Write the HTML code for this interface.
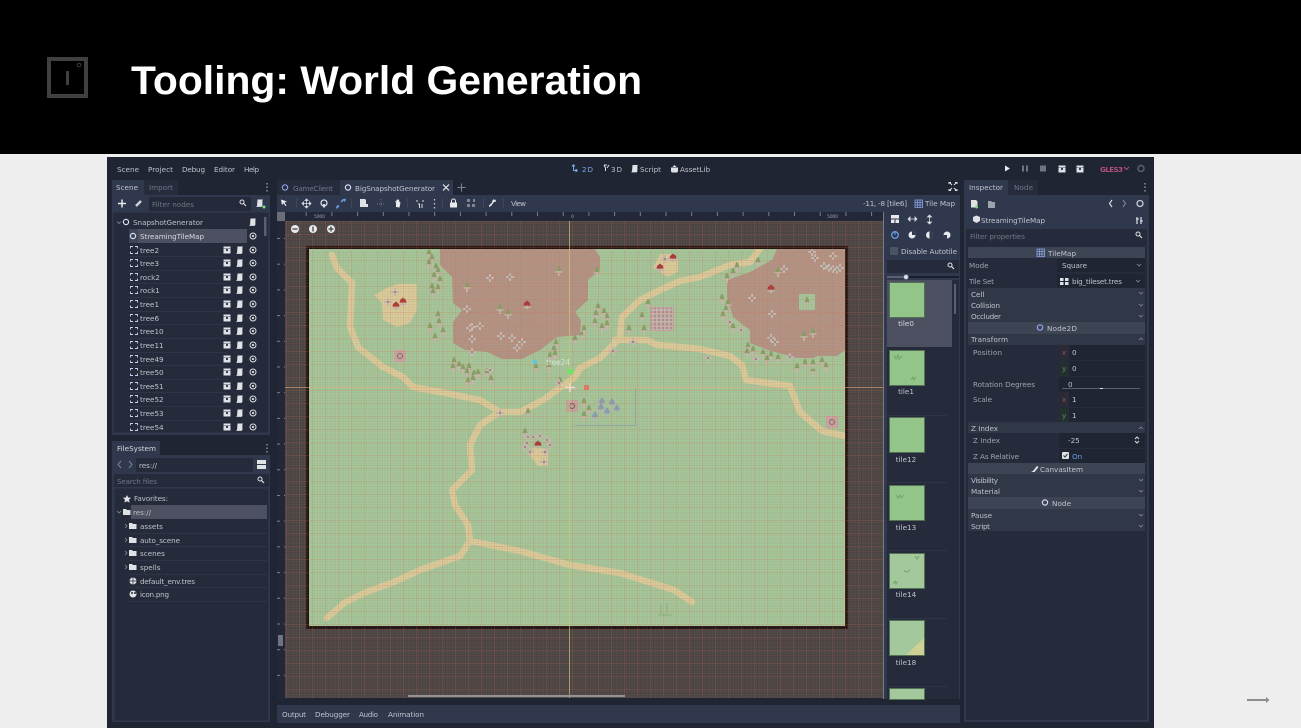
<!DOCTYPE html>
<html><head><meta charset="utf-8"><title>Tooling: World Generation</title>
<style>
html,body{margin:0;padding:0;background:#eee;width:1301px;height:728px;overflow:hidden}
svg{display:block}
text{font-family:"DejaVu Sans","Liberation Sans",sans-serif;font-size:7.2px;fill:#bfc3cc}
.d{fill:#6f7685}
.b{fill:#d5d8de}
#ui{filter:blur(.35px)}
</style></head><body>
<svg width="1301" height="728" viewBox="0 0 1301 728" xmlns="http://www.w3.org/2000/svg">
<defs>
<pattern id="fine" width="2.6" height="2.6" patternUnits="userSpaceOnUse"><path d="M0 0H2.6M0 0V2.6" stroke="#c8644a" stroke-opacity=".22" stroke-width=".8" fill="none"/></pattern>
<pattern id="major" width="13" height="13" patternUnits="userSpaceOnUse"><path d="M0 0H13M0 0V13" stroke="#d8664a" stroke-opacity=".3" stroke-width="1" fill="none"/></pattern>
<pattern id="tx" width="25.7" height="8" patternUnits="userSpaceOnUse" x="280"><path d="M.5 4V8" stroke="#7a8090" fill="none"/></pattern>
<pattern id="ty" width="8" height="25.7" patternUnits="userSpaceOnUse" y="238"><path d="M4 .5H8" stroke="#7a8090" fill="none"/></pattern>
<pattern id="dots" width="4" height="4" patternUnits="userSpaceOnUse" x="651" y="308"><rect width="4" height="4" fill="#a88e8e"/><circle cx="2" cy="2" r="1.600" fill="#d2c9c5"/><circle cx="2" cy="2" r=".5" fill="#85797a"/></pattern>
<clipPath id="mp"><rect x="309" y="249" width="536" height="377"/></clipPath>
<clipPath id="cv"><rect x="285" y="221" width="598" height="477"/></clipPath>
<g id="tr"><path d="M-.9-1.500h1.800v6.500h-1.800zM-3.500-.2h7v1.800h-7z" fill="#c4baae"/><path d="M0-5.500L2-2.500 1.400-2.500 2.800 .5 0 0-2.800 .5-1.400-2.500-2-2.500Z" fill="#84a268"/></g>
<g id="tb"><path d="M-.9-1.500h1.800v6.500h-1.800zM-3.500-.2h7v1.800h-7z" fill="#b4b8ba"/><path d="M0-5L2.600-1 2.800 1 0 1.500-2.800 1-2.600-1Z" fill="#84a0b4"/></g>
<g id="rk"><path d="M-1-4h2v3h3v2h-3v3h-2v-3h-3v-2h3z" fill="#c6bab2"/><rect x="-1" y="-1" width="2" height="2" fill="#948d8a"/></g>
<g id="ms"><path d="M-1-1h2v5h-2zM-3.500 1.500h7v1.400h-7z" fill="#c4b8ae"/><path d="M0-4.500L3-2 3.500 .6h-7L-3-2Z" fill="#a83a3a"/></g>
<g id="ti"><path d="M-3.500-1.500v-2h2.500M1-3.500h2.500v2M3.500 1.500v2h-2.500M-1 3.500h-2.500v-2" fill="none" stroke="#c6d2f2" stroke-width=".9"/></g>
<g id="nd"><circle r="2.600" fill="none" stroke="#d8dcf2" stroke-width="1.200"/></g>
<g id="clap"><path d="M-3.500-1.500h7v5h-7z" fill="#dfe1e6"/><path d="M-3.500-3.500h7v1.600h-7z" fill="#dfe1e6"/><path d="M-1-1h2v2h-2z" fill="#39415a"/></g>
<g id="scr"><path d="M-2.500-3.500h5.500l-.6 1v5.500l-.9.9h-5.500l1-1z" fill="#e0e2e6"/></g>
<g id="eye"><circle r="3" fill="none" stroke="#dcdfe4" stroke-width="1"/><circle r="1.100" fill="#dcdfe4"/></g>
<g id="row"><use href="#clap" x="227"/><use href="#scr" x="240"/><use href="#eye" x="253"/></g>
<g id="fd"><path d="M-4-3h3l1 1h3.500v5h-7.500z" fill="#dfe1e6"/></g>
<g id="cd"><path d="M-2-1L0 1 2-1" fill="none" stroke="#858b99" stroke-width=".8"/></g>
<g id="mag"><circle cx="-1" cy="-1" r="2" fill="none" stroke="#dfe1e6"/><path d="M.5 .5L3 3" stroke="#dfe1e6" stroke-width="1.200"/></g>
</defs>

<rect width="1301" height="728" fill="#eeeeee"/>
<rect width="1301" height="154" fill="#000"/>
<rect x="49" y="59" width="37" height="37" fill="none" stroke="#404040" stroke-width="4"/>
<rect x="66" y="71" width="3" height="14" fill="#404040"/>
<circle cx="79" cy="65" r="1.800" fill="none" stroke="#404040" stroke-width="1"/>
<text x="131" y="94" textLength="511" lengthAdjust="spacingAndGlyphs" style="font-family:'Liberation Sans',sans-serif;font-weight:700;font-size:40px;fill:#fff">Tooling: World Generation</text>

<rect x="1247" y="699" width="21" height="2" fill="#8c8c8c"/><path d="M1266 697l3.500 3-3.500 3z" fill="#8c8c8c"/>

<g id="ui">
<rect x="107" y="157" width="1047" height="571" fill="#1f2533"/>

<text x="117" y="172" textLength="22">Scene</text><text x="148" y="172" textLength="25">Project</text><text x="182" y="172" textLength="23">Debug</text><text x="214" y="172" textLength="21">Editor</text><text x="244" y="172" textLength="15">Help</text>
<path d="M573.500 164.500v6h4M573.500 164.500l-1.500 2M573.500 164.500l1.500 2M577.500 170.500l-2-1.500M577.500 170.500l-2 1.500" stroke="#7fa6e8" fill="none"/>
<text x="582" y="172" textLength="11" style="fill:#7fa6e8">2D</text>
<path d="M604 165l1.500 3v3M604 165l3 0M609 165l-2 3" stroke="#dfe1e6" fill="none"/><text x="611" y="172" textLength="11">3D</text>
<use href="#scr" x="635" y="168.500"/><text x="640" y="172" textLength="21">Script</text>
<path d="M671 167.500h7v4l-1 1h-5l-1-1zM672.500 167l2-2 2 2" fill="#dfe1e6"/><text x="680" y="172" textLength="30">AssetLib</text>
<path d="M1005 165.500l5 3-5 3z" fill="#e8eaee"/>
<path d="M1022 165.500h2v6h-2zM1026 165.500h2v6h-2z" fill="#6e7484"/><rect x="1040" y="165.500" width="6" height="6" fill="#6e7484"/>
<use href="#clap" x="1062" y="169"/><use href="#clap" x="1080" y="169"/>
<text x="1100" y="172" textLength="23" style="fill:#b5507f;font-weight:700;font-size:7px">GLES3</text><path d="M1124 167l2.500 2.500 2.500-2.500" stroke="#b5507f" fill="none"/>
<circle cx="1141" cy="168.500" r="3" fill="none" stroke="#596072" stroke-width="1.500"/>

<rect x="112" y="180" width="32" height="15" fill="#2f384c"/><rect x="144" y="180" width="34" height="15" fill="#262c3b"/>
<text x="116" y="190" textLength="22">Scene</text><text x="149" y="190" textLength="24" class="d">Import</text>
<path d="M267 183v1.500M267 186.500v1.500M267 190v1.500" stroke="#9aa0ac" stroke-width="1.300"/>
<rect x="112" y="195" width="158" height="240" fill="#2f384c"/>
<path d="M118 203.500h8M122 199.500v8" stroke="#e8eaee" stroke-width="1.500"/>
<path d="M136 206l5-5" stroke="#cfd2d9" stroke-width="2.500"/>
<rect x="149" y="197" width="102" height="14" fill="#242a39"/><text x="152" y="207" textLength="42" class="d">Filter nodes</text><use href="#mag" x="243" y="203"/>
<use href="#scr" x="260" y="203"/><circle cx="264" cy="207" r="1.500" fill="#7be07b"/>
<rect x="113" y="212" width="156" height="221" fill="#252b3a" stroke="#2f384c"/>
<use href="#cd" x="119" y="222.500"/><use href="#nd" x="126" y="222"/><text x="133" y="225" textLength="70">SnapshotGenerator</text><use href="#scr" x="253" y="222"/>
<rect x="264" y="217" width="2.500" height="19" fill="#596072"/>
<rect x="129" y="229" width="118" height="14" fill="#4d5060"/><rect x="129" y="229" width="9" height="14" fill="#3e4558"/>
<use href="#nd" x="133" y="236"/><text x="140" y="239" textLength="64" class="b">StreamingTileMap</text><use href="#eye" x="253" y="236"/>
<g fill="#2e3547"><rect x="129" y="256" width="98" height="1"/><rect x="129" y="270" width="98" height="1"/><rect x="129" y="283" width="98" height="1"/><rect x="129" y="297" width="98" height="1"/><rect x="129" y="311" width="98" height="1"/><rect x="129" y="324" width="98" height="1"/><rect x="129" y="338" width="98" height="1"/><rect x="129" y="352" width="98" height="1"/><rect x="129" y="365" width="98" height="1"/><rect x="129" y="379" width="98" height="1"/><rect x="129" y="392" width="98" height="1"/><rect x="129" y="406" width="98" height="1"/><rect x="129" y="420" width="98" height="1"/></g>
<use href="#ti" x="134" y="250"/><text x="140" y="253">tree2</text><use href="#row" y="250"/>
<use href="#ti" x="134" y="263"/><text x="140" y="266">tree3</text><use href="#row" y="263"/>
<use href="#ti" x="134" y="277"/><text x="140" y="280">rock2</text><use href="#row" y="277"/>
<use href="#ti" x="134" y="290"/><text x="140" y="293">rock1</text><use href="#row" y="290"/>
<use href="#ti" x="134" y="304"/><text x="140" y="307">tree1</text><use href="#row" y="304"/>
<use href="#ti" x="134" y="318"/><text x="140" y="321">tree6</text><use href="#row" y="318"/>
<use href="#ti" x="134" y="331"/><text x="140" y="334">tree10</text><use href="#row" y="331"/>
<use href="#ti" x="134" y="345"/><text x="140" y="348">tree11</text><use href="#row" y="345"/>
<use href="#ti" x="134" y="359"/><text x="140" y="362">tree49</text><use href="#row" y="359"/>
<use href="#ti" x="134" y="372"/><text x="140" y="375">tree50</text><use href="#row" y="372"/>
<use href="#ti" x="134" y="386"/><text x="140" y="389">tree51</text><use href="#row" y="386"/>
<use href="#ti" x="134" y="399"/><text x="140" y="402">tree52</text><use href="#row" y="399"/>
<use href="#ti" x="134" y="413"/><text x="140" y="416">tree53</text><use href="#row" y="413"/>
<use href="#ti" x="134" y="427"/><text x="140" y="430">tree54</text><use href="#row" y="427"/>

<rect x="112" y="441" width="48" height="14" fill="#2f384c"/><text x="117" y="451" textLength="39" class="b">FileSystem</text>
<path d="M267 444v1.500M267 447.500v1.500M267 451v1.500" stroke="#9aa0ac" stroke-width="1.300"/>
<rect x="112" y="455" width="158" height="267" fill="#2f384c"/>
<path d="M121 461l-3 3.500 3 3.500M129 461l3 3.500-3 3.500" stroke="#7d8494" fill="none"/>
<rect x="136" y="458" width="117" height="14" fill="#252b3a"/><text x="139" y="468" textLength="18">res://</text>
<path d="M257 460h9v4h-9zM257 465h9v4h-9z" fill="#e0e2e6"/>
<rect x="114" y="474" width="155" height="13" fill="#252b3a"/><text x="117" y="484" textLength="40" class="d">Search files</text><use href="#mag" x="261" y="480"/>
<rect x="114" y="488" width="155" height="233" fill="#252b3a" stroke="#2f384c"/>
<path d="M127 495l1.200 2.500 2.800 .3-2 2 .6 2.800-2.600-1.400-2.600 1.400 .6-2.800-2-2 2.800-.3z" fill="#e0e2e6"/><text x="134" y="501" textLength="34">Favorites:</text>
<rect x="131" y="505" width="136" height="14" fill="#4d5060"/>
<use href="#cd" x="119" y="512"/><use href="#fd" x="127" y="512"/><text x="133" y="515" textLength="18">res://</text>
<g stroke="#2e3547"><path d="M129 533.500H267M129 546.500H267M129 560.500H267M129 574.500H267M129 587.500H267M129 601.500H267"/></g>
<path d="M125 524l2 2-2 2M125 538l2 2-2 2M125 551l2 2-2 2M125 565l2 2-2 2" stroke="#858b99" stroke-width=".8" fill="none"/>
<use href="#fd" x="133" y="526"/><text x="140" y="529">assets</text>
<use href="#fd" x="133" y="540"/><text x="140" y="543" textLength="40">auto_scene</text>
<use href="#fd" x="133" y="553"/><text x="140" y="556">scenes</text>
<use href="#fd" x="133" y="567"/><text x="140" y="570">spells</text>
<circle cx="133" cy="581" r="3.500" fill="#e0e2e6"/><path d="M129.500 581h7M133 577.500v7" stroke="#252b3a" stroke-width=".7"/><text x="140" y="584" textLength="55">default_env.tres</text>
<circle cx="133" cy="594" r="3.500" fill="#e0e2e6"/><circle cx="132" cy="593" r="1" fill="#252b3a"/><circle cx="135" cy="593" r="1" fill="#252b3a"/><text x="140" y="597" textLength="29">icon.png</text>

<rect x="277" y="180" width="63" height="15" fill="#262c3b"/>
<rect x="340" y="180" width="113" height="15" fill="#2f384c"/>
<circle cx="285" cy="187.500" r="2.700" fill="none" stroke="#8da6e8" stroke-width="1.100"/><text x="293" y="191" textLength="40" class="d">GameClient</text>
<use href="#nd" x="348" y="187.500"/><text x="355" y="191" textLength="80">BigSnapshotGenerator</text>
<path d="M443 184.500l6 6M449 184.500l-6 6" stroke="#e8eaee" stroke-width="1.200"/>
<path d="M457.500 187.500h8M461.500 183.500v8" stroke="#7d8494"/>
<path d="M949 184v-1.500h2M955 182.500h2v1.500M957 189v1.500h-2M951 190.500h-2V189M950 183l2 2M956 183l-2 2M956 190l-2-2M950 190l2-2" stroke="#e0e2e6" fill="none"/>

<rect x="277" y="195" width="683" height="17" fill="#2f384c"/>
<path d="M281 199.500l6 2-2.500 1 2 3-1 .6-2-3-1.500 2z" fill="#e8eaee"/>
<path d="M296.500 198v10" stroke="#3d465a"/>
<path d="M306.500 199.500v8M302.500 203.500h8M306.500 199l-1.500 1.500h3zM306.500 208l-1.500-1.500h3zM302 203.500l1.500-1.500v3zM311 203.500l-1.500-1.500v3z" stroke="#d8dbe2" stroke-width=".8" fill="#d8dbe2"/>
<circle cx="324" cy="203" r="3" fill="none" stroke="#d8dbe2" stroke-width="1.300"/><rect x="323" y="204" width="2" height="3.500" fill="#d8dbe2"/>
<path d="M337 207.500l2-2M343 200l2-.5-.5 2M338 207l-1 .5 .5-2M341 202l2.500-2.500" stroke="#6d9fe8" stroke-width="1.500" fill="none"/>
<path d="M351.500 198v10M407.500 198v10M442.500 198v10M483.500 198v10M503.500 198v10" stroke="#3d465a"/>
<path d="M360 199h5l1 1v4h2v3h-8z" fill="#e0e2e6"/>
<path d="M381 199v8M377 204h7" stroke="#6e7484" stroke-dasharray="1 1"/>
<path d="M396 207v-4l-1-2 1.500 .5v-2l1 .5 .5-1 1 1 .5 2 1 .5-1 5z" fill="#e8eaee"/>
<path d="M417 200v2M423 200v2M418 204h1.500v4M422 204v4" stroke="#d8dbe2" fill="none"/>
<path d="M434.500 199v1.500M434.500 203v1.500M434.500 207v1.500" stroke="#c6cad2" stroke-width="1.300"/>
<rect x="450" y="202.500" width="7" height="5" rx=".5" fill="#e8eaee"/><path d="M451.500 202.500v-1.500a2 2 0 0 1 4 0v1.500" stroke="#e8eaee" fill="none"/>
<path d="M467 199h3v3h-3zM472 204h3v3h-3zM473 199h2v3h-2zM467 204h3v3h-3z" fill="#7d8494"/>
<path d="M489 207l2-1 3-4 2-.5-.5-2-1.500 .5-.5-1-1 1.500-.5 2-3 3z" fill="#e8eaee"/>
<text x="511" y="206" textLength="15">View</text>
<text x="863" y="206" textLength="44">-11, -8 [tile6]</text>
<path d="M915 200h7.500v7.500H915zM917.500 200v7.500M920 200v7.500M915 202.500h7.500M915 205h7.500" stroke="#8da6e8" stroke-width=".8" fill="none"/>
<text x="925" y="206" textLength="30">Tile Map</text>

<g>
<g clip-path="url(#cv)">
<rect x="285" y="221" width="598" height="477" fill="#484546"/>
<rect x="306" y="246" width="542" height="383" fill="#1b1413"/>
<rect x="306" y="246" width="542" height="383" fill="none" stroke="#4a2a26" stroke-width="1" stroke-dasharray="1.500 1.500"/>
<rect x="309" y="249" width="536" height="377" fill="#a2c79b"/>
<g clip-path="url(#mp)">
<g fill="#b09486">
<path d="M440 249V265L452 277 453 303 462 310 453 322V343L465 350 487 352 502 359H522L540 350 557 337 580 335 581 320 575 312 588 300V280L600 270V257L595 249Z"/>
<path d="M777 249L772 260 750 272 727 280V297L733 317 750 330V343L768 350 797 358H813L817 356H837L845 350V249Z"/>
</g>
<rect x="799" y="294" width="16" height="16" rx="1" fill="#a2c79b"/>
<g fill="#d6cc9c">
<path d="M374 295L387 288 397 284H417V310L410 323 397 327 383 320 382 303Z"/>
<path d="M653 268L660 254H672L678 260V272L668 277Z"/>
<path d="M533 447L548 449 548 466 538 466 530 456Z"/>
</g>
<g fill="none" stroke="#d6cc9c" stroke-width="6.500" stroke-linejoin="round" stroke-linecap="round">
<path d="M332 255L337 268 352 283 350 327 358 347 383 367 403 377 413 387 440 392 480 400 500 412 520 412 543 400 557 390 575 377 580 368 600 358 615 343 620 337 622 317 640 300 660 290 680 281 700 277 730 265 750 262 762 246"/>
<path d="M615 340H647L657 345 680 347 700 349 730 356 742 365 746 380 790 386 800 412 822 431 850 437"/>
<path d="M498 413L480 425 470 445 472 470 452 490 455 505 468 525 470 541 520 551 570 565 620 573 674 590 692 602"/>
<path d="M470 541L460 556 420 570 394 582 364 593 344 603 327 618"/>
</g>
<rect x="394" y="350" width="12" height="12" fill="#c6a6a3"/>
<rect x="566" y="400" width="12" height="12" fill="#c2a3a1"/>
<rect x="826" y="416" width="12" height="12" fill="#c6a6a3"/>
<rect x="650" y="307" width="24" height="24" fill="#c6a6a3"/><rect x="651" y="308" width="22" height="22" fill="url(#dots)"/>
<circle cx="400" cy="356" r="2.500" fill="none" stroke="#7d6a68"/><circle cx="572" cy="406" r="2.500" fill="none" stroke="#6a5a58"/><circle cx="832" cy="422" r="2.500" fill="none" stroke="#7d6a68"/>
<path d="M661 605v9M667 603v11M658 615h14" stroke="#94bd8c" stroke-width="2" fill="none"/>
<use href="#tr" x="429" y="254"/><use href="#tr" x="432" y="259"/><use href="#tr" x="429" y="264"/><use href="#tr" x="436" y="268"/><use href="#tr" x="438" y="272"/><use href="#tr" x="434" y="277"/><use href="#tr" x="440" y="281"/><use href="#tr" x="432" y="288"/><use href="#tr" x="438" y="289"/><use href="#tr" x="433" y="293"/><use href="#tr" x="438" y="316"/><use href="#tr" x="439" y="323"/><use href="#tr" x="430" y="328"/><use href="#tr" x="443" y="332"/><use href="#tr" x="435" y="338"/><use href="#tr" x="454" y="362"/><use href="#tr" x="453" y="368"/><use href="#tr" x="459" y="366"/><use href="#tr" x="463" y="369"/><use href="#tr" x="469" y="368"/><use href="#tr" x="467" y="373"/><use href="#tr" x="474" y="375"/><use href="#tr" x="478" y="374"/><use href="#tr" x="468" y="382"/><use href="#tr" x="473" y="380"/><use href="#tr" x="487" y="373"/><use href="#tr" x="491" y="380"/><use href="#tr" x="467" y="287"/><use href="#tr" x="500" y="309"/><use href="#tr" x="508" y="314"/><use href="#tr" x="559" y="271"/><use href="#tr" x="597" y="272"/><use href="#tr" x="556" y="344"/><use href="#tr" x="554" y="350"/><use href="#tr" x="550" y="357"/><use href="#tr" x="555" y="355"/><use href="#tr" x="536" y="368"/><use href="#tr" x="549" y="367"/><use href="#tr" x="575" y="340"/><use href="#tr" x="582" y="335"/><use href="#tr" x="584" y="330"/><use href="#tr" x="598" y="308"/><use href="#tr" x="596" y="315"/><use href="#tr" x="604" y="313"/><use href="#tr" x="607" y="318"/><use href="#tr" x="595" y="323"/><use href="#tr" x="607" y="325"/><use href="#tr" x="602" y="328"/><use href="#tr" x="560" y="382"/><use href="#tr" x="648" y="304"/><use href="#tr" x="642" y="317"/><use href="#tr" x="644" y="330"/><use href="#tr" x="629" y="330"/><use href="#tr" x="528" y="413"/><use href="#tr" x="525" y="433"/><use href="#tr" x="584" y="403"/><use href="#tr" x="589" y="410"/><use href="#tr" x="584" y="416"/><use href="#tr" x="737" y="267"/><use href="#tr" x="733" y="273"/><use href="#tr" x="727" y="278"/><use href="#tr" x="758" y="262"/><use href="#tr" x="778" y="272"/><use href="#tr" x="722" y="299"/><use href="#tr" x="728" y="304"/><use href="#tr" x="726" y="310"/><use href="#tr" x="723" y="316"/><use href="#tr" x="733" y="328"/><use href="#tr" x="807" y="302"/><use href="#tr" x="804" y="336"/><use href="#tr" x="813" y="333"/><use href="#tr" x="748" y="347"/><use href="#tr" x="747" y="353"/><use href="#tr" x="753" y="351"/><use href="#tr" x="763" y="354"/><use href="#tr" x="771" y="356"/><use href="#tr" x="767" y="360"/><use href="#tr" x="778" y="359"/><use href="#tr" x="797" y="368"/><use href="#tr" x="805" y="364"/><use href="#tr" x="813" y="371"/><use href="#tr" x="813" y="364"/><use href="#tr" x="822" y="362"/><use href="#tr" x="826" y="367"/>
<use href="#tb" x="602" y="402"/><use href="#tb" x="601" y="408"/><use href="#tb" x="612" y="403"/><use href="#tb" x="617" y="409"/><use href="#tb" x="607" y="412"/><use href="#tb" x="595" y="416"/>
<use href="#rk" x="395" y="292"/><use href="#rk" x="388" y="302"/><use href="#rk" x="467" y="309"/><use href="#rk" x="490" y="278"/><use href="#rk" x="510" y="277"/><use href="#rk" x="472" y="327"/><use href="#rk" x="480" y="326"/><use href="#rk" x="470" y="328"/><use href="#rk" x="472" y="339"/><use href="#rk" x="501" y="336"/><use href="#rk" x="512" y="338"/><use href="#rk" x="522" y="342"/><use href="#rk" x="517" y="348"/><use href="#rk" x="472" y="352"/><use href="#rk" x="490" y="370"/><use href="#rk" x="784" y="269"/><use href="#rk" x="752" y="298"/><use href="#rk" x="772" y="314"/><use href="#rk" x="741" y="330"/><use href="#rk" x="730" y="322"/><use href="#rk" x="771" y="338"/><use href="#rk" x="775" y="342"/><use href="#rk" x="756" y="359"/><use href="#rk" x="790" y="357"/><use href="#rk" x="708" y="358"/><use href="#rk" x="833" y="256"/><use href="#rk" x="812" y="252"/><use href="#rk" x="815" y="258"/><use href="#rk" x="824" y="266"/><use href="#rk" x="829" y="268"/><use href="#rk" x="833" y="269"/><use href="#rk" x="837" y="270"/><use href="#rk" x="840" y="268"/><use href="#rk" x="633" y="342"/><use href="#rk" x="613" y="351"/><use href="#rk" x="559" y="383"/><use href="#rk" x="500" y="413"/><use href="#rk" x="527" y="443"/><use href="#rk" x="528" y="437"/><use href="#rk" x="533" y="437"/><use href="#rk" x="540" y="436"/><use href="#rk" x="547" y="440"/><use href="#rk" x="550" y="445"/><use href="#rk" x="545" y="452"/><use href="#rk" x="530" y="452"/><use href="#rk" x="525" y="447"/><use href="#rk" x="544" y="462"/><use href="#rk" x="665" y="259"/><use href="#rk" x="659" y="268"/>
<use href="#ms" x="403" y="302"/><use href="#ms" x="396" y="306"/><use href="#ms" x="527" y="305"/><use href="#ms" x="771" y="289"/><use href="#ms" x="673" y="258"/><use href="#ms" x="660" y="268"/><use href="#ms" x="538" y="445"/>
</g>
</g>
<rect x="277" y="212" width="606" height="9" fill="#222838"/><rect x="285" y="212" width="598" height="8" fill="url(#tx)"/>
<rect x="277" y="221" width="8" height="478" fill="#222838"/><rect x="277" y="221" width="8" height="477" fill="url(#ty)"/>
<rect x="277" y="212" width="8" height="9" fill="#6a6e78"/>
<text x="314" y="218" textLength="11" style="font-size:4.500px;fill:#9aa0ac">5000</text>
<text x="571" y="218" style="font-size:4.500px;fill:#9aa0ac">0</text>
<text x="827" y="218" textLength="11" style="font-size:4.500px;fill:#9aa0ac">5000</text>
<rect x="278" y="635" width="5" height="11" fill="#6e7484"/>
<rect x="883" y="212" width="1" height="487" fill="#7a7d84"/>
</g>

<rect x="884" y="212" width="76" height="487" fill="#2f384c"/>
<rect x="891" y="215" width="8" height="8" fill="#e8eaee"/><path d="M891 219h8M895 219v4" stroke="#2f384c"/>
<path d="M908 219h9M908 219l2-2v4zM917 219l-2-2v4z" stroke="#d8dbe2" stroke-width=".8" fill="#d8dbe2"/>
<path d="M929.500 215v9M929.500 215l-2 2h4zM929.500 224l-2-2h4z" stroke="#d8dbe2" stroke-width=".8" fill="#d8dbe2"/>
<circle cx="895" cy="235" r="3.300" fill="none" stroke="#6d9fe8" stroke-width="1.300"/><path d="M895 232v3" stroke="#6d9fe8"/>
<circle cx="912" cy="235" r="3.500" fill="#e8eaee"/><path d="M912 235V231.500A3.500 3.500 0 0 1 915.500 235Z" fill="#2f384c"/>
<circle cx="929.500" cy="235" r="3.500" fill="#e8eaee"/><path d="M929.500 231.500A3.500 3.500 0 0 1 929.500 238.500Z" fill="#2f384c"/>
<circle cx="947" cy="235" r="3.500" fill="#e8eaee"/><path d="M947 235V238.500A3.500 3.500 0 0 1 943.500 235Z" fill="#2f384c"/>
<rect x="890" y="247" width="8" height="8" rx="1" fill="#4b5366"/><text x="901" y="254" textLength="56">Disable Autotile</text>
<rect x="887" y="260" width="72" height="13" fill="#252b3a"/><use href="#mag" x="951" y="266"/>
<rect x="887" y="276" width="72" height="2" fill="#1a1f2c"/><rect x="887" y="276" width="19" height="2" fill="#596072"/><circle cx="906" cy="277" r="2.500" fill="#dfe1e6" stroke="#596072"/>
<rect x="887" y="280" width="72" height="419" fill="#252b3a"/>
<rect x="887" y="280" width="65" height="67" fill="#4d5060"/>
<rect x="954" y="284" width="2" height="30" fill="#596072"/>
<g fill="#2e3547"><rect x="887" y="415" width="60" height="1"/><rect x="887" y="482" width="60" height="1"/><rect x="887" y="550" width="60" height="1"/><rect x="887" y="618" width="60" height="1"/><rect x="887" y="686" width="60" height="1"/></g>
<g fill="#93c48a" stroke="#567056"><rect x="889.500" y="282.500" width="35" height="35"/><rect x="889.500" y="350.500" width="35" height="35"/><rect x="889.500" y="417.500" width="35" height="35"/><rect x="889.500" y="485.500" width="35" height="35"/></g>
<g fill="#a2c89c" stroke="#567056"><rect x="889.500" y="553.500" width="35" height="35"/><rect x="889.500" y="620.500" width="35" height="35"/><rect x="889.500" y="688.500" width="35" height="11"/></g>
<path d="M906 655l18-17v17z" fill="#ced096"/>
<path d="M894 355l2 4 2-4 1 4 3-3M911 380l2-3 1 3 2-3M896 495l2 3 2-3 1 3 3-3M915 556l2 3 2-3M893 584l2-3 1 3 2-3M904 571l3 1 3-2" stroke="#72a468" fill="none"/>
<g><text x="906" y="326" text-anchor="middle" class="b">tile0</text><text x="906" y="394" text-anchor="middle">tile1</text><text x="906" y="462" text-anchor="middle">tile12</text><text x="906" y="530" text-anchor="middle">tile13</text><text x="906" y="597" text-anchor="middle">tile14</text><text x="906" y="665" text-anchor="middle">tile18</text></g>

<rect x="277" y="705" width="683" height="18" fill="#2f384c"/>
<text x="282" y="717" textLength="24">Output</text><text x="315" y="717" textLength="35">Debugger</text><text x="359" y="717" textLength="19">Audio</text><text x="388" y="717" textLength="36">Animation</text>

<rect x="964" y="180" width="44" height="15" fill="#2f384c"/><rect x="1008" y="180" width="30" height="15" fill="#262c3b"/>
<text x="969" y="190" textLength="34">Inspector</text><text x="1014" y="190" textLength="19" class="d">Node</text>
<path d="M1145 183v1.500M1145 186.500v1.500M1145 190v1.500" stroke="#9aa0ac" stroke-width="1.300"/>
<rect x="964" y="195" width="185" height="527" fill="#2f384c"/>
<rect x="966" y="243" width="181" height="477" fill="#252b3a"/>
<path d="M971 200h5l1.500 1.500v6H971z" fill="#e0e2e6"/><circle cx="976.500" cy="207" r="1.500" fill="#7be07b"/>
<path d="M988 201h3l1 1h3v6h-7z" fill="#9ea4af"/>
<path d="M1112 200l-2.500 3.500 2.500 3.500" stroke="#dfe1e6" fill="none" stroke-width="1.100"/><path d="M1123 200l2.500 3.500-2.500 3.500" stroke="#7d8494" fill="none" stroke-width="1.100"/>
<circle cx="1140" cy="203.500" r="3" fill="none" stroke="#c6cad2" stroke-width="1.300"/>
<path d="M973 217l3.500-1.500 3.500 1.500v4l-3.500 2-3.500-2z" fill="#dfe1e6"/><text x="981" y="223" textLength="64">StreamingTileMap</text>
<path d="M1137 217v7M1141 217v7" stroke="#dfe1e6" stroke-width="1.200"/><path d="M1136 219h3M1140 221h3" stroke="#dfe1e6"/>
<rect x="966" y="229" width="181" height="14" fill="#252b3a"/><text x="970" y="239" textLength="55" class="d">Filter properties</text><use href="#mag" x="1139" y="235"/>

<rect x="968" y="247" width="177" height="11" fill="#3d4454"/>
<path d="M1037 249h7.500v7.500h-7.500zM1039.500 249v7.500M1042 249v7.500M1037 251.500h7.500M1037 254h7.500" stroke="#8da6e8" stroke-width=".8" fill="none"/>
<text x="1048" y="256" textLength="28">TileMap</text>
<rect x="1057" y="258" width="88" height="14" fill="#1f2533"/><rect x="1057" y="274" width="88" height="14" fill="#1f2533"/>
<text x="969" y="268" style="fill:#9ea4af">Mode</text><text x="1062" y="268" textLength="25">Square</text><use href="#cd" x="1139" y="265"/>
<text x="969" y="284" textLength="25" style="fill:#9ea4af">Tile Set</text>
<rect x="1060" y="278" width="3.500" height="3" fill="#dfe1e6"/><rect x="1065" y="278" width="3.500" height="3" fill="#dfe1e6"/><rect x="1060" y="282" width="3.500" height="3" fill="#dfe1e6"/><rect x="1065" y="282" width="3.500" height="3" fill="#dfe1e6"/>
<text x="1072" y="284" textLength="50">big_tileset.tres</text><use href="#cd" x="1138" y="281"/>
<rect x="968" y="288" width="177" height="34" fill="#303746"/>
<text x="971" y="297">Cell</text><text x="971" y="308" textLength="29">Collision</text><text x="971" y="319" textLength="30">Occluder</text>
<use href="#cd" x="1141" y="293"/><use href="#cd" x="1141" y="305"/><use href="#cd" x="1141" y="316"/>
<rect x="968" y="322" width="177" height="12" fill="#3d4454"/>
<circle cx="1040" cy="327.500" r="2.700" fill="none" stroke="#8da6e8" stroke-width="1.200"/><text x="1047" y="331" textLength="30">Node2D</text>
<rect x="968" y="334" width="177" height="11" fill="#303746"/><text x="971" y="342" textLength="37">Transform</text><path d="M1139 340l2-2 2 2" stroke="#858b99" fill="none" stroke-width=".8"/>
<text x="973" y="355" textLength="29" style="fill:#9ea4af">Position</text>
<rect x="1059" y="345" width="86" height="15" fill="#1f2533"/><rect x="1059" y="361" width="86" height="15" fill="#1f2533"/>
<rect x="1059" y="345" width="10" height="15" fill="#2b2a36"/><rect x="1059" y="361" width="10" height="15" fill="#23302f"/>
<text x="1062" y="355" style="fill:#8a5a5a">x</text><text x="1072" y="355">0</text><text x="1062" y="371" style="fill:#5a8a6a">y</text><text x="1072" y="371">0</text>
<text x="973" y="387" textLength="62" style="fill:#9ea4af">Rotation Degrees</text>
<rect x="1059" y="377" width="86" height="15" fill="#1f2533"/><text x="1068" y="387">0</text><path d="M1062 388.500h78" stroke="#596072"/><path d="M1100 388.500h3" stroke="#e0e2e6"/>
<text x="973" y="402" textLength="19" style="fill:#9ea4af">Scale</text>
<rect x="1059" y="392" width="86" height="15" fill="#1f2533"/><rect x="1059" y="408" width="86" height="15" fill="#1f2533"/>
<rect x="1059" y="392" width="10" height="15" fill="#2b2a36"/><rect x="1059" y="408" width="10" height="15" fill="#23302f"/>
<text x="1062" y="402" style="fill:#8a5a5a">x</text><text x="1072" y="402">1</text><text x="1062" y="418" style="fill:#5a8a6a">y</text><text x="1072" y="418">1</text>
<rect x="968" y="422" width="177" height="11" fill="#303746"/><text x="971" y="431">Z Index</text><path d="M1139 429l2-2 2 2" stroke="#858b99" fill="none" stroke-width=".8"/>
<text x="973" y="443" style="fill:#9ea4af">Z Index</text>
<rect x="1059" y="433" width="86" height="15" fill="#1f2533"/><text x="1068" y="443">-25</text>
<path d="M1135 439l2-2 2 2M1135 441l2 2 2-2" stroke="#dfe1e6" fill="none"/>
<text x="973" y="459" textLength="46" style="fill:#9ea4af">Z As Relative</text>
<rect x="1059" y="449" width="86" height="15" fill="#1f2533"/><rect x="1062" y="452" width="7" height="7" rx="1" fill="#dfe1e6"/><path d="M1063.500 455.500l1.500 1.500 2.500-3" stroke="#333" fill="none"/><text x="1072" y="459" style="fill:#6d9fe8">On</text>
<rect x="968" y="463" width="177" height="11" fill="#3d4454"/>
<path d="M1031 472l2-1 4-5 1.500 1-4 5z" fill="#e8eaee"/><text x="1040" y="472" textLength="43">CanvasItem</text>
<rect x="968" y="474" width="177" height="23" fill="#303746"/>
<text x="971" y="483" textLength="27">Visibility</text><text x="971" y="494" textLength="29">Material</text><use href="#cd" x="1141" y="480"/><use href="#cd" x="1141" y="491"/>
<rect x="968" y="497" width="177" height="12" fill="#3d4454"/>
<use href="#nd" x="1045" y="502.500"/><text x="1052" y="506" textLength="19">Node</text>
<rect x="968" y="509" width="177" height="22" fill="#303746"/>
<text x="971" y="518" textLength="21">Pause</text><text x="971" y="529" textLength="19">Script</text><use href="#cd" x="1141" y="515"/><use href="#cd" x="1141" y="526"/>
</g>

<g clip-path="url(#cv)">
<rect x="285" y="221" width="598" height="477" fill="url(#fine)"/>
<rect x="285" y="221" width="598" height="477" fill="url(#major)"/>
<path d="M569.500 221V698" stroke="#c8c86a" stroke-opacity=".7"/>
<path d="M285 387.500H883" stroke="#e8b078" stroke-opacity=".55"/>
<path d="M635.500 388V425.500H575" stroke="#8e9aa8" stroke-opacity=".7" fill="none"/>
<rect x="568" y="369" width="5" height="5" fill="#6ee85a"/>
<rect x="584" y="385" width="5" height="5" fill="#e07a68"/>
<path d="M565 387.500h10M570 383v9" stroke="#ffd8c8" stroke-width="1.500"/>
<rect x="533" y="360" width="4" height="4" fill="#5cc8d8"/>
<text x="546" y="365" textLength="24" style="font-size:7.500px;fill:#d5e4d5">tree24</text>
<path d="M408 696H625" stroke="#949494" stroke-width="2"/>
<circle cx="295" cy="229" r="4" fill="#e8eaee"/><path d="M292.500 229h5" stroke="#444" stroke-width="1.300"/>
<circle cx="313" cy="229" r="4" fill="#e8eaee"/><path d="M313 226.500v5" stroke="#444" stroke-width="1.300"/>
<circle cx="331" cy="229" r="4" fill="#e8eaee"/><path d="M328.500 229h5M331 226.500v5" stroke="#444" stroke-width="1.300"/>
</g>
</svg>
</body></html>
